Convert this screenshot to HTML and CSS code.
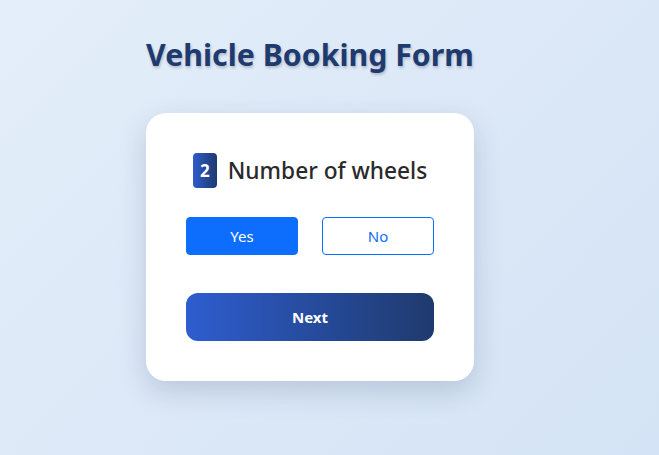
FILE: index.html
```html
<!DOCTYPE html>
<html>
<head>
<meta charset="utf-8">
<link rel="stylesheet" href="styles.css">
</head>
<body>
<div class="wrap">
  <h1 class="title">Vehicle Booking Form</h1>
  <div class="card">
    <div class="question">
      <span class="badge">2</span>
      <span class="qtext">Number of wheels</span>
    </div>
    <div class="choices">
      <button class="btn yes">Yes</button>
      <button class="btn no">No</button>
    </div>
    <button class="next">Next</button>
  </div>
</div>
</body>
</html>
```

FILE: styles.css
```css
html, body { margin: 0; height: 100%; }
body {
  font-family: "Noto Sans", "Open Sans", sans-serif;
  background: linear-gradient(135deg, #e4eefa 0%, #d4e3f5 100%);
  min-height: 455px;
}
.wrap {
  width: 328px;
  margin-left: 146px;
  padding-top: 33px;
}
.title {
  margin: 0 0 37px;
  text-align: center;
  font-size: 30.3px;
  font-weight: 700;
  color: #1e3a6e;
  line-height: 43px;
  text-shadow: 1px 2px 3px rgba(0,0,0,0.2);
}
.card {
  background: #fff;
  border-radius: 20px;
  box-shadow: 0 10px 28px rgba(30,50,90,0.18);
  padding: 40px;
  height: 268px;
  box-sizing: border-box;
}
.question {
  display: flex;
  align-items: center;
  justify-content: center;
  gap: 11px;
  height: 35px;
}
.badge {
  width: 24px;
  height: 35px;
  border-radius: 4px;
  background: linear-gradient(90deg, #2f5bc9, #1e3a6e);
  color: #fff;
  font-weight: 700;
  font-size: 17px;
  display: flex;
  align-items: center;
  justify-content: center;
}
.qtext {
  font-size: 22.7px;
  color: #2a2a2a;
  font-weight: 500;
}
.choices {
  display: flex;
  gap: 24px;
  margin-top: 29px;
}
.btn {
  flex: 1;
  height: 38px;
  border-radius: 4px;
  font-family: "Noto Sans", sans-serif;
  font-size: 15px;
  border: 1px solid #0d6efd;
  cursor: pointer;
}
.yes { background: #0d6efd; color: #fff; }
.no { background: #fff; color: #0d6efd; }
.next {
  display: block;
  width: 100%;
  height: 48px;
  margin-top: 38px;
  border: none;
  border-radius: 12px;
  background: linear-gradient(90deg, #2e5dcf 0%, #1f3a6d 100%);
  color: #fff;
  font-family: "Noto Sans", sans-serif;
  font-weight: 700;
  font-size: 15px;
}
```
